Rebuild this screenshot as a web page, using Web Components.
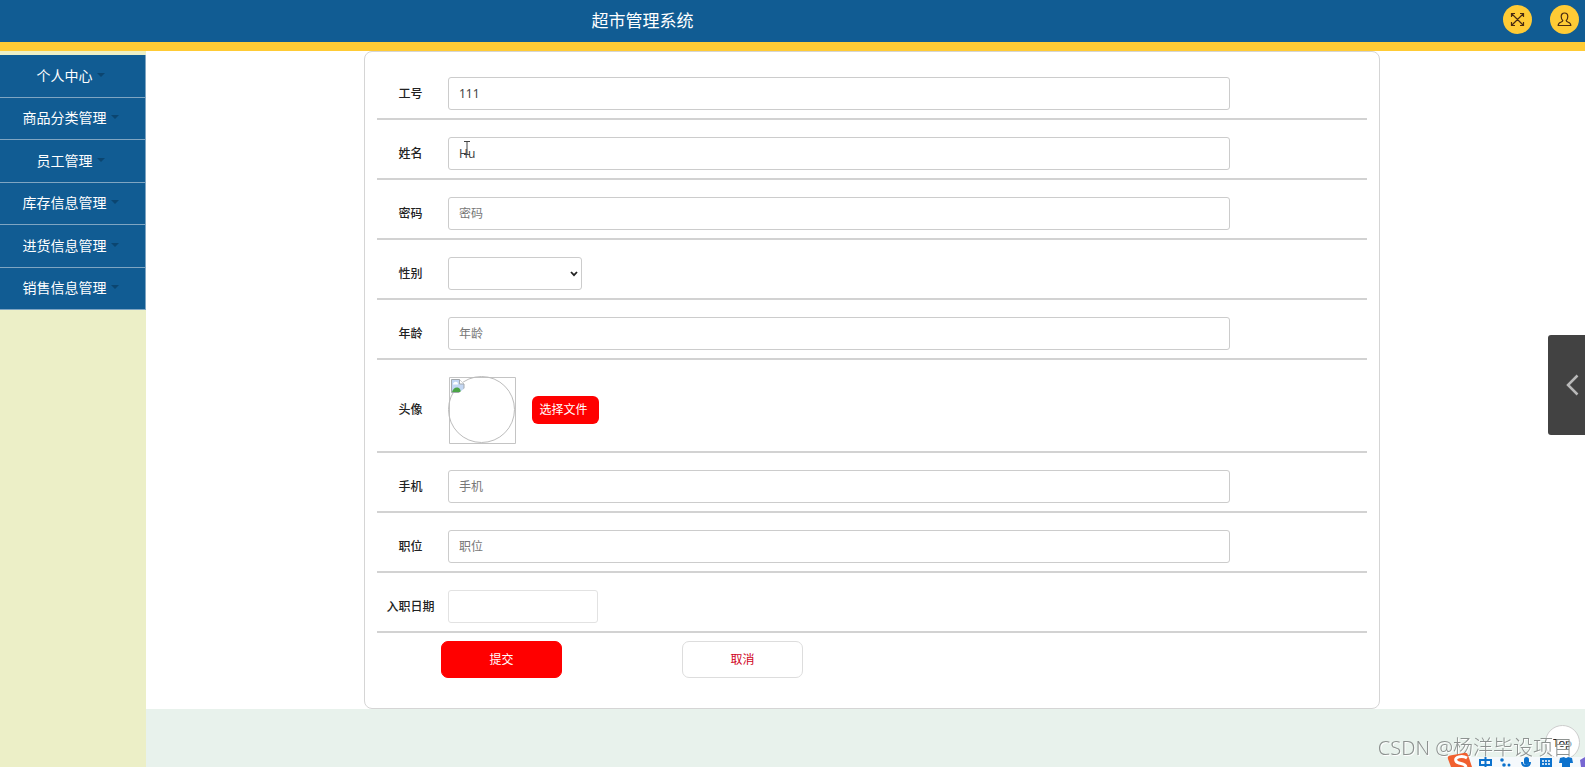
<!DOCTYPE html>
<html lang="zh-CN">
<head>
<meta charset="utf-8">
<title>超市管理系统</title>
<style>
html,body{margin:0;height:100%}
body{font-family:"Noto Sans","Noto Sans CJK SC",sans-serif;font-size:12px;line-height:16px;color:#333;overflow:hidden}
</style>
</head>
<body>
<market-app></market-app>
<script>
const define=(name,html)=>customElements.define(name,class extends HTMLElement{
  connectedCallback(){
    if(this.shadowRoot)return;
    const root=this.attachShadow({mode:'open'});
    root.innerHTML=typeof html==='function'?html(this):html;
  }
});

define('icon-button',el=>`<style>
:host{display:block}
button{display:grid;place-items:center;width:29px;height:29px;padding:0;border:0;border-radius:50%;background:#ffcb35;color:#4a2b12}
</style><button type="button" aria-label="${el.getAttribute('label')}"><slot></slot></button>`);

define('top-bar',`<style>
:host{display:flex;align-items:center;height:42px;background:#115c93;border-bottom:9px solid #ffcb35}
h1{flex:1;margin:0;padding-right:218px;text-align:center;font-size:17px;font-weight:400;line-height:24px;color:#fff}
nav{display:flex;gap:18px;padding:0 6px 4px 0}
svg{display:block;fill:none;stroke:currentColor}
</style>
<h1>超市管理系统</h1>
<nav>
<icon-button label="全屏"><svg width="15" height="15" viewBox="0 0 15 15" stroke-width="1.2"><path d="M1.500 5V1.500H5M10 1.500h3.500V5M13.500 10v3.500H10M5 13.500H1.500V10M1.500 1.500l12 12M13.500 1.500l-12 12"/></svg></icon-button>
<icon-button label="用户"><svg width="15" height="15" viewBox="0 0 15 15" stroke-width="1.2"><path d="M5.800 8.500C4.600 7.400 4.200 6 4.200 4.500C4.200 2.500 5.500 1 7.500 1s3.300 1.500 3.300 3.500c0 1.500-.4 2.900-1.600 4c0 1 .5 1.200 2 1.700c1.800.6 2.600 1.300 2.600 3.300H1.200c0-2 .8-2.700 2.600-3.300c1.500-.5 2-.7 2-1.700z"/></svg></icon-button>
</nav>`);

define('menu-item',`<style>
:host{display:block;border-bottom:1px solid #7fa5c2;box-sizing:border-box}
a{display:flex;align-items:center;justify-content:center;gap:4px;height:100%;padding-right:4px;color:#fff;font-size:14px;line-height:20px;text-decoration:none}
i{border:4px solid transparent;border-top-color:#0b4570;border-bottom:0;margin-bottom:2px}
</style><a href="#"><slot></slot><i></i></a>`);

define('side-menu',`<style>
:host{display:block;box-sizing:border-box;width:146px;padding-top:4px;background:#ecefc7}
nav{display:grid;grid-auto-rows:1fr;height:255px;background:#115c93;border-right:1px solid #7fa5c2}
</style><nav><menu-item>个人中心</menu-item><menu-item>商品分类管理</menu-item><menu-item>员工管理</menu-item><menu-item>库存信息管理</menu-item><menu-item>进货信息管理</menu-item><menu-item>销售信息管理</menu-item></nav>`);

define('form-row',el=>{
  const label=el.getAttribute('label'),kind=el.getAttribute('kind')||'text';
  const field={
    text:`<input id="f" type="text" value="${el.getAttribute('value')||''}" placeholder="${label}">`,
    select:`<span class="sel"><select id="f"><option></option></select><svg width="8" height="6" viewBox="0 0 8 6"><path d="M1 1l3 3.200L7 1" fill="none" stroke="#222" stroke-width="1.800"/></svg></span>`,
    date:`<input id="f" class="date" type="text">`,
    file:`<span class="file"><svg width="68" height="68" viewBox="0 0 68 68"><path d="M1.500 1.500h66v66h-66z" fill="none" stroke="#c4c4c4"/><circle cx="33.500" cy="33.500" r="33" fill="none" stroke="#bcbcbc"/><path d="M3.500 3.500h8l4.500 4.500v8.500H3.500z" fill="#c3d7f4" stroke="#a3a8ad"/><path d="M4 16c1-4 5-6 8-3l1 3z" fill="#4ba446"/><path d="M5 8.500c0-3 5-4 5 0z" fill="#fff"/><path d="M10 17.500l7.500-6v6z" fill="#fff"/><path d="M11.500 3.500V8H16" fill="#fff" stroke="#a3a8ad"/></svg><button id="f" type="button">选择文件</button></span>`
  }[kind];
  return `<style>
:host{display:flex;align-items:center;gap:4px;padding:17px 0 8px;border-bottom:2px solid #d2d2d2}
label{flex:none;width:67px;text-align:center;font-weight:500;color:#222}
input,select{box-sizing:border-box;height:33px;border:1px solid #ccc;border-radius:3px;background:#fff;font:inherit;color:#444;padding:0 10px;margin:0}
input{width:79%}
::placeholder{color:#777;opacity:1}
.sel{display:grid;width:134px;align-items:center}
.sel>*{grid-area:1/1}
select{width:100%;appearance:none}
.sel svg{justify-self:end;margin-right:4px;pointer-events:none}
.date{width:150px;border-color:#e2e2e2}
.file{display:flex;align-items:center;gap:16px;height:66px}
.file svg{flex:none}
button{width:67px;height:28px;padding:0 4px 0 0;border:0;border-radius:6px;background:#f00;color:#fff;font:inherit}
</style><label for="f">${label}</label>${field}`});

define('action-button',`<style>
:host{display:block}
button{box-sizing:border-box;width:121px;height:37px;border:1px solid #ddd;border-radius:7px;background:#fff;color:#d0021b;font:inherit}
:host([primary]) button{background:#f00;border-color:#f00;color:#fff}
</style><button type="button"><slot></slot></button>`);

define('staff-form',`<style>
:host{display:block;box-sizing:border-box;border:1px solid #d5d5d5;border-radius:8px;background:#fff;padding:8px 12px 30px}
.actions{display:flex;gap:120px;padding:8px 0 0 64px}
</style>
<form-row label="工号" value="111"></form-row>
<form-row label="姓名" value="Hu"></form-row>
<form-row label="密码"></form-row>
<form-row label="性别" kind="select"></form-row>
<form-row label="年龄"></form-row>
<form-row label="头像" kind="file"></form-row>
<form-row label="手机"></form-row>
<form-row label="职位"></form-row>
<form-row label="入职日期" kind="date"></form-row>
<div class="actions"><action-button primary>提交</action-button><action-button>取消</action-button></div>`);

define('side-drawer',`<style>
:host{position:fixed;right:0;top:335px}
button{display:grid;place-items:center end;width:37px;height:100px;padding:0 6px 0 0;border:0;border-radius:3px 0 0 3px;background:#424242}
</style><button type="button" aria-label="展开"><svg width="13" height="22" viewBox="0 0 13 22"><path d="M11.500 1.500L2 11l9.500 9.500" fill="none" stroke="#b9b9b9" stroke-width="2.500"/></svg></button>`);

define('back-top',`<style>
:host{position:fixed;right:5px;bottom:7px}
button{display:block;width:35px;height:35px;padding:0;border:1px solid #ccc;border-radius:50%;background:#fff;color:#222;font:inherit;font-size:11px}
</style><button type="button">Top</button>`);

define('input-bar',`<style>
:host{position:fixed;right:0;bottom:0}
svg{display:block}
</style><svg width="140" height="16" viewBox="0 0 140 16"><path d="M24 6h116v10H20z" fill="#f5f9fc"/><path d="M3 8q-1-3 2-3.500L19 2q3-1 4 2l4 12H6z" fill="#f1602f"/><path d="M22 7C17 4 9 6 11 10s9 1 10 6" fill="none" stroke="#fff" stroke-width="3"/><g fill="none" stroke="#0c72cd" stroke-width="2"><path d="M35 9h11v5H35zM40.500 6v10M77 11q0 4 4 4t4-4"/></g><g fill="#0c72cd"><circle cx="57" cy="9" r="1.800"/><circle cx="59" cy="14" r="1.800"/><circle cx="64" cy="14" r="1.500"/><rect x="79" y="6" width="5" height="8" rx="2.500"/><path d="M95 7h12v9H95zM115 7l4-1q2 2 4 0l4 1 1 5h-3v4h-8v-4h-3z"/></g><path d="M97 10h2m1 0h2m1 0h2M97 13h2m1 0h2m1 0h2" stroke="#fff" stroke-width="1.500"/><path d="M135 9l5-3v10h-4z" fill="#7767d2"/></svg>`);

define('water-mark',`<style>
:host{position:fixed;right:12px;bottom:5px;font-size:20px;line-height:28px;font-weight:300;color:#8d9290;text-shadow:1px 1px #fff;white-space:nowrap;pointer-events:none}
</style><slot></slot>`);

define('text-cursor',`<style>
:host{position:fixed;left:463px;top:141px;pointer-events:none}
svg{display:block}
</style><svg width="8" height="14" viewBox="0 0 8 14"><path d="M1 .5h6M1 13.500h6M4 1v12" fill="none" stroke="#444"/></svg>`);

define('market-app',`<style>
:host{display:flex;flex-direction:column;min-height:100vh}
.body{flex:1;display:flex}
main{flex:1;background:#e8f2ec}
.page{display:flex;background:#fff;padding:0 14.250% 0 15.150%}
staff-form{flex:1}
</style>
<top-bar></top-bar>
<div class="body"><side-menu></side-menu><main><div class="page"><staff-form></staff-form></div></main></div>
<side-drawer></side-drawer><back-top></back-top><water-mark>CSDN @杨洋毕设项目</water-mark><input-bar></input-bar><text-cursor></text-cursor>
`);
</script>
</body>
</html>
